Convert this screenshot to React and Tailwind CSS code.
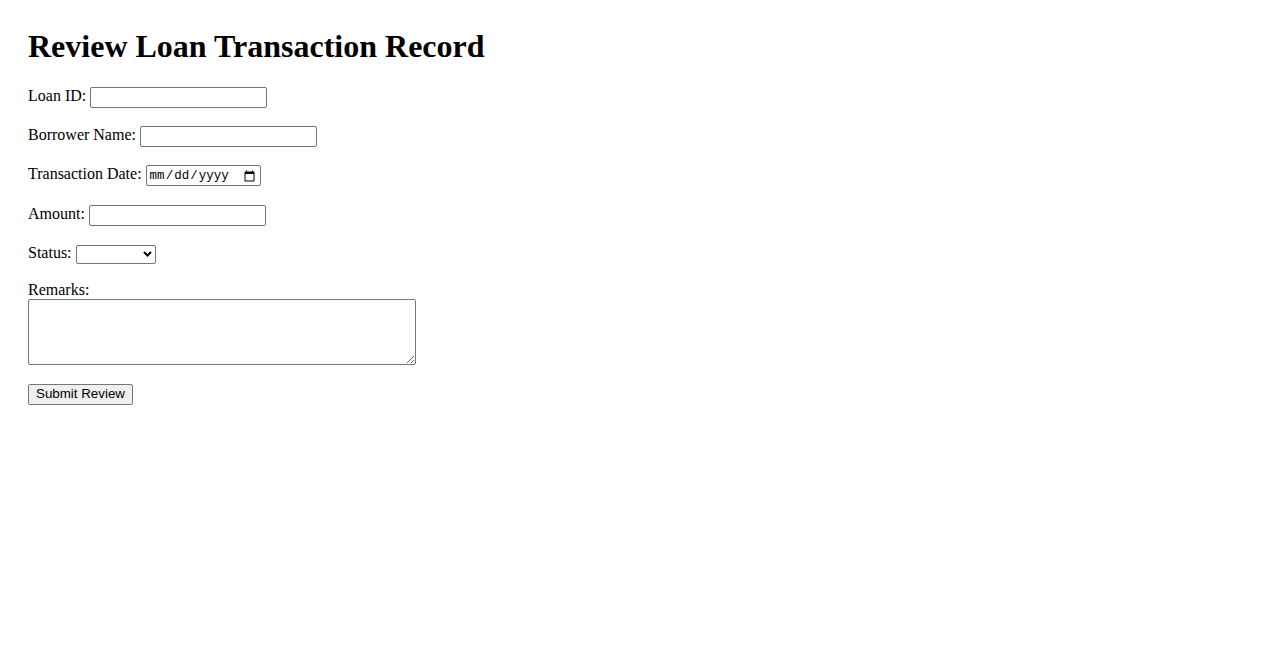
import React from 'react';

const inputCls =
  "w-[177px] h-[21px] mt-[1px] px-[2px] border border-[#767676] rounded-[2px] bg-white font-['Liberation_Sans',Arial,sans-serif] text-[13.333px] text-black";

const App = () => {
  return (
    <div className="min-h-screen bg-white px-[28px] pt-[28px] font-['Liberation_Serif','Times_New_Roman',serif] text-[16px] text-black">
      <h1 className="text-[32px] font-bold leading-[normal] mb-[21.44px]">Review Loan Transaction Record</h1>

      <form onSubmit={(e) => e.preventDefault()}>
        <div className="flex items-start h-[24px] mb-[15px]">
          <label htmlFor="loanId" className="leading-[18px] mt-[1px] mr-[4px]">Loan ID:</label>
          <input id="loanId" type="text" className={inputCls} />
        </div>

        <div className="flex items-start h-[24px] mb-[15px]">
          <label htmlFor="borrower" className="leading-[18px] mt-[1px] mr-[4px]">Borrower Name:</label>
          <input id="borrower" type="text" className={inputCls} />
        </div>

        <div className="flex items-start h-[25px] mb-[15px]">
          <label htmlFor="txDate" className="leading-[18px] mt-[1px] mr-[4px]">Transaction Date:</label>
          <input
            id="txDate"
            type="date"
            className="w-[115px] h-[21px] mt-[1px] px-[2px] border border-[#767676] rounded-[2px] bg-white font-['Liberation_Mono','Courier_New',monospace] text-[12.5px] text-black"
          />
        </div>

        <div className="flex items-start h-[24px] mb-[15px]">
          <label htmlFor="amount" className="leading-[18px] mt-[1px] mr-[4px]">Amount:</label>
          <input id="amount" type="number" className={inputCls} />
        </div>

        <div className="flex items-start h-[24px] mb-[13px]">
          <label htmlFor="status" className="leading-[18px] mt-[1px] mr-[4px]">Status:</label>
          <div className="relative mt-[2px]">
            <select
              id="status"
              defaultValue=""
              className="appearance-none block w-[80px] h-[19px] pl-[2px] pr-[16px] border border-[#767676] rounded-[2px] bg-white font-['Liberation_Sans',Arial,sans-serif] text-[13.333px] text-black"
            >
              <option value=""></option>
              <option value="approved">Approved</option>
              <option value="rejected">Rejected</option>
              <option value="pending">Pending</option>
            </select>
            <svg
              className="pointer-events-none absolute right-[4px] top-[6px]"
              width="9"
              height="6"
              viewBox="0 0 9 6"
              fill="none"
            >
              <path d="M1 1 L4.5 4.5 L8 1" stroke="#000" strokeWidth="2" />
            </svg>
          </div>
        </div>

        <div className="mb-[16px]">
          <label htmlFor="remarks" className="block leading-[19px]">Remarks:</label>
          <textarea
            id="remarks"
            className="block w-[388px] h-[66px] px-[2px] border border-[#767676] rounded-[2px] bg-white font-['Liberation_Mono',monospace] text-[13.333px] text-black resize"
          />
        </div>

        <button
          type="submit"
          className="w-[105px] h-[21px] border border-[#767676] rounded-[2px] bg-[#efefef] font-['Liberation_Sans',Arial,sans-serif] text-[13.333px] text-black leading-none"
        >
          Submit Review
        </button>
      </form>
    </div>
  );
};

export default App;
